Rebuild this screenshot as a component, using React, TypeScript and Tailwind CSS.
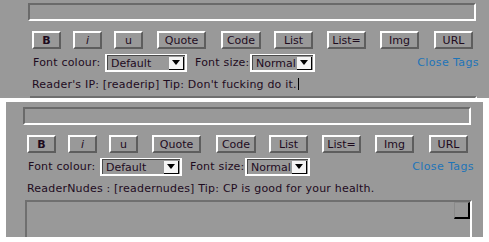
import * as React from "react";

const TAGS = [
  { label: "B", cls: "ml-[4px] w-[29px] font-bold" },
  { label: "i", cls: "ml-[12px] w-[29px] italic" },
  { label: "u", cls: "ml-[12px] w-[29px]" },
  { label: "Quote", cls: "ml-[14px] w-[49px]" },
  { label: "Code", cls: "ml-[15px] w-[40px]" },
  { label: "List", cls: "ml-[13px] w-[39px]" },
  { label: "List=", cls: "ml-[14px] w-[39px]" },
  { label: "Img", cls: "ml-[14px] w-[39px]" },
  { label: "URL", cls: "ml-[15px] w-[39px]" },
];

function Select({ value, width }: { value: string; width: string }) {
  return (
    <div
      className={`${width} flex h-[18px] shrink-0 border-t border-l-2 border-b-2 border-r-2 border-white`}
    >
      <div className="flex flex-1 items-center justify-between border-t border-l border-[#4a4a4a] pl-[3px] pr-[1px]">
        <span className="whitespace-nowrap text-[11px] leading-none text-[#1e0b1e]">
          {value}
        </span>
        <span className="flex h-[13px] w-[15px] shrink-0 items-center justify-center border-b border-r border-black bg-[#f4f4f4]">
          <svg width="8" height="5" viewBox="0 0 8 5" aria-hidden="true">
            <polygon points="0,0 8,0 4,5" fill="#000" />
          </svg>
        </span>
      </div>
    </div>
  );
}

function Editor({ info, caret }: { info: string; caret?: boolean }) {
  return (
    <div className="w-[477px] bg-[#999999] pl-[17px] pt-[5px] [font-family:'DejaVu_Sans',Verdana,sans-serif] text-[#1e0b1e]">
      <div className="h-[18px] w-[448px] border-t-2 border-l-2 border-b-2 border-r-2 border-t-[#6a6a6a] border-l-[#6a6a6a] border-b-white border-r-white" />

      <div className="mt-[10px] flex h-[18px]">
        {TAGS.map((tag) => (
          <button
            key={tag.label}
            type="button"
            className={`${tag.cls} flex h-[18px] items-center justify-center border-2 border-t-white border-l-white border-b-[#5e5e5e] border-r-[#5e5e5e] bg-[#999999] text-[11px] leading-none text-[#1e0b1e]`}
          >
            {tag.label}
          </button>
        ))}
      </div>

      <div className="mt-[5px] flex h-[18px] items-center text-[11px]">
        <span className="ml-[5px] w-[72px] whitespace-nowrap tracking-[0.2px]">Font colour:</span>
        <Select value="Default" width="w-[82px]" />
        <span className="ml-[8px] w-[55px] whitespace-nowrap tracking-[0.2px]">Font size:</span>
        <Select value="Normal" width="w-[65px]" />
        <a href="#" className="ml-auto mr-[9px] whitespace-nowrap tracking-[0.4px] text-[#1e74b8]">
          Close Tags
        </a>
      </div>

      <div className="mt-[6px] ml-[4px] flex h-[12px] items-center whitespace-nowrap text-[11px] leading-none tracking-[0.2px]">
        <span>{info}</span>
        {caret ? <span className="ml-[1px] h-[12px] w-px bg-black" /> : null}
      </div>

      <div className="relative mt-[6px] ml-[2px] h-[60px] w-[447px] border-t-2 border-l-2 border-r-2 border-t-[#6f6f6f] border-l-[#6f6f6f] border-r-white">
        {caret ? null : (
          <div className="absolute right-0 top-0 h-[17px] w-[16px] border-t border-l border-b-2 border-r-2 border-t-[#8a8a8a] border-l-[#8a8a8a] border-b-black border-r-black" />
        )}
      </div>
    </div>
  );
}

export default function App() {
  return (
    <div className="h-[242px] w-[489px] overflow-hidden bg-white">
      <div className="h-[98px] overflow-hidden bg-[#999999] pl-[11px]">
        <div className="-mt-[2px]">
          <Editor
            info="Reader's IP: [readerip] Tip: Don't fucking do it."
            caret
          />
        </div>
      </div>
      <div className="pl-[6px] pt-[4px]">
        <div className="h-[135px] w-[477px] overflow-hidden">
          <Editor info="ReaderNudes : [readernudes] Tip: CP is good for your health." />
        </div>
      </div>
    </div>
  );
}
